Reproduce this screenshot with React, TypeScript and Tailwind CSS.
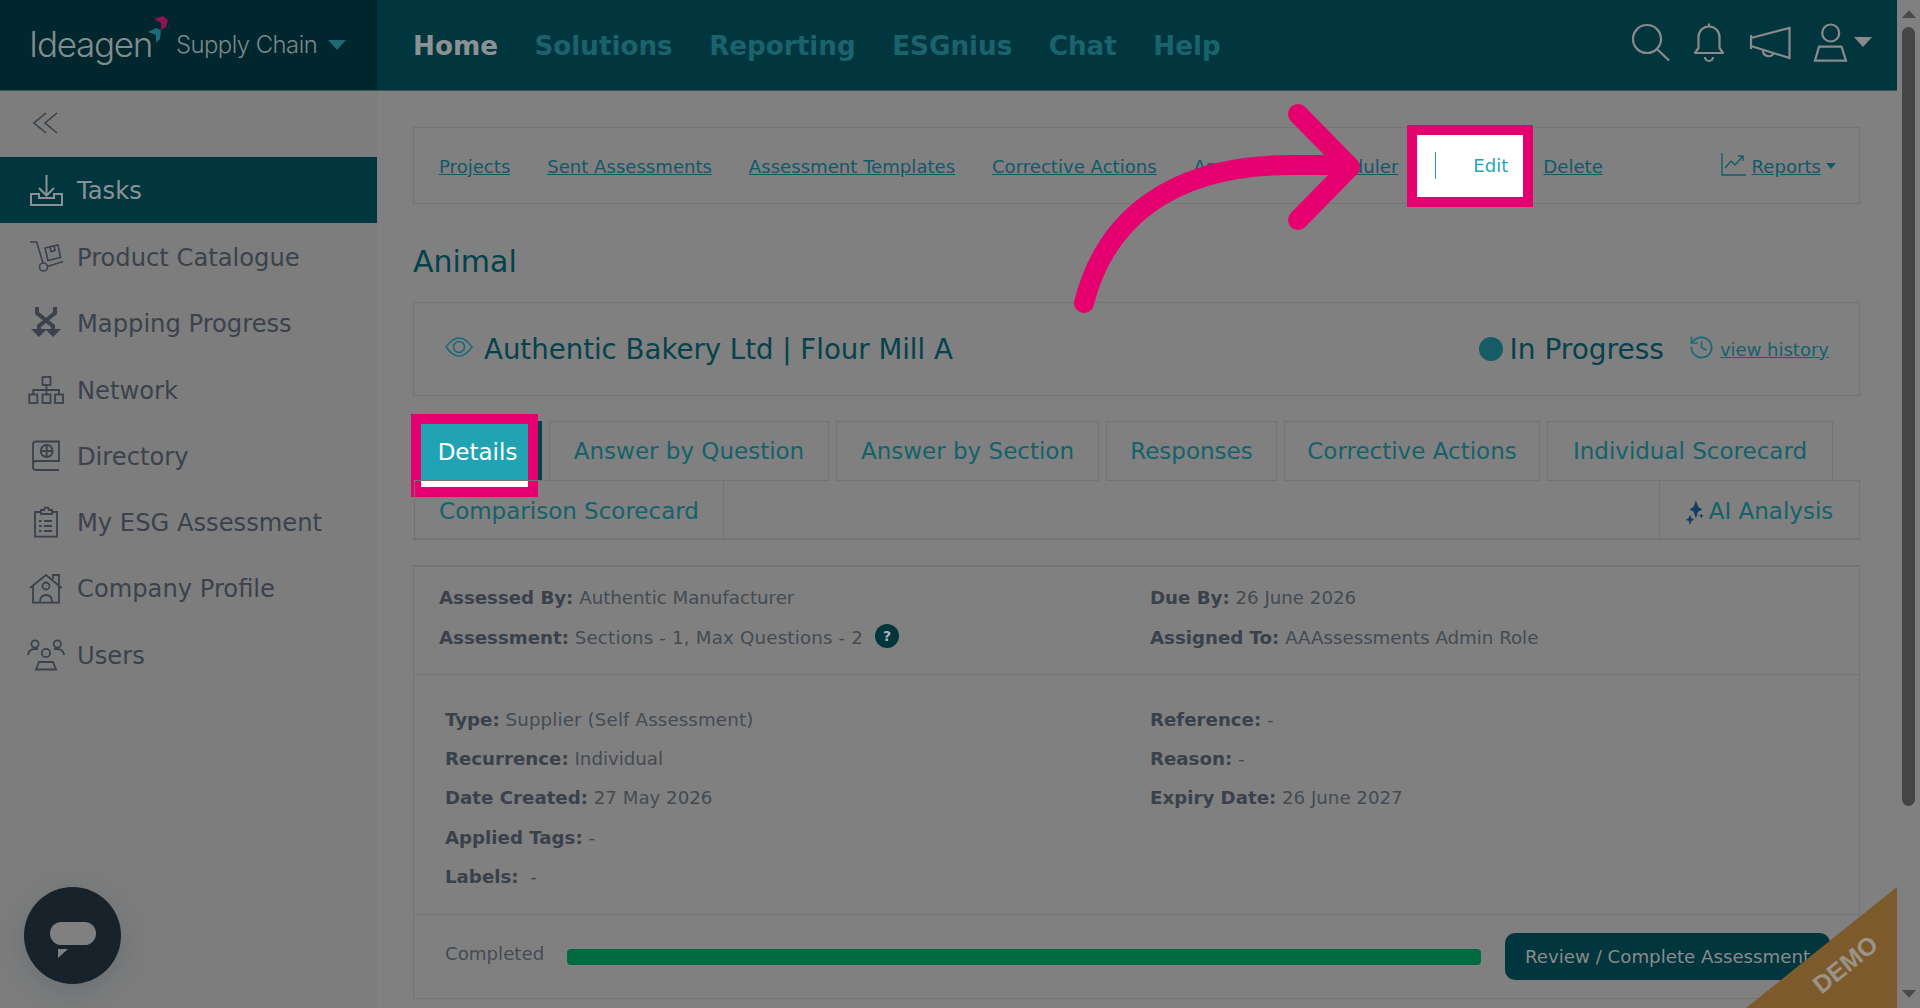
import { History } from "lucide-react";

const side = "#3b424b";

function TasksIcon() {
  return (
    <svg viewBox="0 0 40 40" className="w-10 h-10" fill="none" stroke="#8a9294" strokeWidth="2">
      <path d="M5 24V35H36V24H28V28H13V24Z" />
      <path d="M20.5 5V25M13 18l7.5 7.5 7.5-7.5" />
    </svg>
  );
}
function CatalogueIcon() {
  return (
    <svg viewBox="0 0 40 40" className="w-10 h-10" fill="none" stroke={side} strokeWidth="1.6">
      <path d="M4 5H10.7L17 26" />
      <circle cx="17.5" cy="30" r="4" />
      <path d="M21.5 29.5L37 24.5" />
      <path d="M19 11L32 8L34.5 20.5L22 23.5Z" />
      <path d="M24 10L25 14.5L29 13.5L28 9" />
    </svg>
  );
}
function MappingIcon() {
  return (
    <svg viewBox="0 0 40 40" className="w-10 h-10" fill="none" stroke={side} strokeWidth="4">
      <path d="M11 4V10L27 23V27M29 4V10L13 23V27" />
      <path d="M5 26H21L13 34Z M19 26H35L27 34Z" fill={side} stroke="none" />
    </svg>
  );
}
function NetworkIcon() {
  return (
    <svg viewBox="0 0 40 40" className="w-10 h-10" fill="none" stroke={side} strokeWidth="1.8">
      <rect x="16.5" y="7" width="8" height="8" />
      <rect x="3.3" y="24.5" width="8" height="8.5" />
      <rect x="16.5" y="24.5" width="8" height="8.5" />
      <rect x="29" y="24.5" width="8" height="8.5" />
      <path d="M20.5 15V24.5M7.3 24.5V20H33V24.5" />
    </svg>
  );
}
function DirectoryIcon() {
  return (
    <svg viewBox="0 0 40 40" className="w-10 h-10" fill="none" stroke={side} strokeWidth="1.8">
      <path d="M7 28a3 3 0 0 1 3-3H33V5.5H10a3 3 0 0 0-3 3V31a3 3 0 0 0 3 3H33" />
      <circle cx="20.7" cy="15" r="6" />
      <path d="M14.7 15H26.7M20.7 9V21" />
    </svg>
  );
}
function EsgIcon() {
  return (
    <svg viewBox="0 0 40 40" className="w-10 h-10" fill="none" stroke={side} strokeWidth="1.8">
      <path d="M15 10H9V34.7H31V10H26" />
      <path d="M15 12V8H18a2.5 2.5 0 0 1 5 0H26V12Z" />
      <path d="M18 19H26M18 24H26M18 29H26M13 19H15.5M13 24H15.5M13 29H15.5" />
    </svg>
  );
}
function CompanyIcon() {
  return (
    <svg viewBox="0 0 40 40" className="w-10 h-10" fill="none" stroke={side} strokeWidth="1.8">
      <path d="M4 19L20 6L35.7 19" />
      <path d="M7 17V33.7H33V17" />
      <path d="M27 10V6H33V16" />
      <circle cx="20" cy="17" r="3.5" />
      <path d="M14 33c0-5 2.5-7 6-7s6 2 6 7" />
    </svg>
  );
}
function UsersIcon() {
  return (
    <svg viewBox="0 0 40 40" className="w-10 h-10" fill="none" stroke={side} strokeWidth="1.8">
      <circle cx="9" cy="9" r="3.6" />
      <circle cx="31.3" cy="9" r="3.6" />
      <circle cx="20" cy="18" r="4.2" />
      <path d="M10 34.5L13 27H27L30 34.5Z" />
      <path d="M2 20c.5-4 3-6 7-6h3M38 20c-.5-4-3-6-7-6h-3" />
    </svg>
  );
}

const menu = [
  { label: "Product Catalogue", icon: <CatalogueIcon /> },
  { label: "Mapping Progress", icon: <MappingIcon /> },
  { label: "Network", icon: <NetworkIcon /> },
  { label: "Directory", icon: <DirectoryIcon /> },
  { label: "My ESG Assessment", icon: <EsgIcon /> },
  { label: "Company Profile", icon: <CompanyIcon /> },
  { label: "Users", icon: <UsersIcon /> },
];

function Info({ k, v, className = "", vClass = "" }: { k: string; v: string; className?: string; vClass?: string }) {
  return (
    <div className={className}>
      <span className="font-bold text-[#3a414a]">{k}</span> <span className={vClass}>{v}</span>
    </div>
  );
}

function Tab({ label, w }: { label: string; w: string }) {
  return (
    <div className={`${w} h-[60px] pt-px flex items-center justify-center border border-[#747474] text-[23px] text-[#14626a] whitespace-nowrap`}>
      {label}
    </div>
  );
}

export default function App() {
  return (
    <div className="relative flex w-full h-[1008px] overflow-hidden bg-[#808080] font-['DejaVu_Sans',sans-serif] text-[18.2px] text-[#444b52]">
      <div className="flex flex-col w-[1897px] shrink-0">
        <header className="flex h-[91px] shrink-0 bg-[#02363f] border-b border-[#2f5a62]">
          <div className="relative flex items-center w-[377px] shrink-0 bg-[#00272e] pl-[29px]">
            <span className="font-['Inter',sans-serif] font-light text-[35px] tracking-[-1.3px] text-[#848c8e] leading-none mb-[2px]">Ideagen</span>
            <svg viewBox="0 0 24 30" className="w-6 h-[30px] -ml-[6px] mb-[28px]">
              <path d="M8 3L17 0L22 4L20 11L15 14V7Z" fill="#8a1552" />
              <path d="M2 16L10 12L15 14L14 23L10 27V19Z" fill="#1c6b78" />
            </svg>
            <span className="font-['Inter',sans-serif] font-light text-[23.8px] tracking-[-0.5px] text-[#7d8688] ml-[6px]">Supply Chain</span>
            <svg viewBox="0 0 18 10" className="w-[18px] h-[10px] ml-[11px]">
              <path d="M0 0H18L9 10Z" fill="#1d6a72" />
            </svg>
          </div>
          <nav className="flex items-center pl-[36px] pt-[4px] gap-[36.5px] text-[26.2px] font-bold text-[#1a636d]">
            <span className="text-[#8c9294]">Home</span>
            <span>Solutions</span>
            <span>Reporting</span>
            <span>ESGnius</span>
            <span>Chat</span>
            <span>Help</span>
          </nav>
          <div className="ml-auto flex items-start pt-[20px] pr-[25px]">
            <svg viewBox="0 0 44 44" className="w-11 h-11" fill="none" stroke="#8a8a8a" strokeWidth="2.2">
              <circle cx="18" cy="19" r="14" />
              <path d="M28.5 29.5L40 40.5" />
            </svg>
            <svg viewBox="0 0 36 44" className="w-9 h-11 ml-[19px]" fill="none" stroke="#8a8a8a" strokeWidth="2.2" strokeLinejoin="round">
              <path d="M17 3.5V6.5M3 33L6.5 28V17a10.5 10.5 0 0 1 21 0V28L31 33Z" />
              <path d="M13 37a4 4 0 0 0 8 0" />
            </svg>
            <svg viewBox="0 0 46 44" className="w-[46px] h-11 ml-[19px]" fill="none" stroke="#8a8a8a" strokeWidth="2.2">
              <path d="M4 15V29M4 18L42.5 8V38L4 26" />
              <path d="M16 30a5.7 5.7 0 0 0 10.5 3.5" />
            </svg>
            <svg viewBox="0 0 36 44" className="w-9 h-11 ml-[19px]" fill="none" stroke="#8a8a8a" strokeWidth="2.2">
              <circle cx="18.7" cy="13" r="8.5" />
              <path d="M7 26.7H29.5L34 40.7H3Z" />
            </svg>
            <svg viewBox="0 0 18 10" className="w-[18px] h-[10px] ml-[6px] mt-[17px]">
              <path d="M0 0H18L9 10Z" fill="#8a8a8a" />
            </svg>
          </div>
        </header>

        <div className="flex flex-1 min-h-0">
          <aside className="w-[377px] shrink-0 bg-[#7d7d7d]">
            <div className="h-[66px] flex items-center pl-[33px]">
              <svg viewBox="0 0 26 22" className="w-[26px] h-[22px] mb-[2px]" fill="none" stroke={side} strokeWidth="1.6">
                <path d="M13 1L1 11L13 21M24 1L12 11L24 21" />
              </svg>
            </div>
            <div className="h-[66px] mb-px flex items-center pl-[26px] bg-[#02363f]">
              <TasksIcon />
              <span className="ml-[11px] mt-[2px] text-[24.2px] text-[#8a9294]">Tasks</span>
            </div>
            {menu.map((m) => (
              <div key={m.label} className="h-[66.3px] flex items-center pl-[26px]">
                {m.icon}
                <span className="ml-[11px] mt-[2px] text-[24.2px] text-[#3b424b]">{m.label}</span>
              </div>
            ))}
          </aside>

          <main className="flex-1 min-w-0 pl-[36px] pr-[37px] pt-[36px]">
            <div className="flex items-center h-[77px] border border-[#747474] pl-[25px] pr-[23px] text-[#10596a] text-[18.1px] whitespace-nowrap">
              <span className="underline mt-[2px]">Projects</span>
              <span className="underline mt-[2px] ml-[36.8px]">Sent Assessments</span>
              <span className="underline mt-[2px] ml-[36.8px]">Assessment Templates</span>
              <span className="underline mt-[2px] ml-[36.8px]">Corrective Actions</span>
              <span className="underline mt-[2px] ml-[36.8px]">Assessment Scheduler</span>
              <div className="ml-[9px] w-[126px] h-[82px] shrink-0 flex items-center border-[10px] border-[#e6006f] bg-white">
                <span className="ml-[18px] w-px h-[27px] bg-[#2aa3b3]" />
                <span className="ml-[37px] text-[#25a6b5]">Edit</span>
              </div>
              <span className="underline mt-[2px] ml-[10px]">Delete</span>
              <div className="ml-auto flex items-center mt-[2px]">
                <svg viewBox="0 0 25 23" className="w-[25px] h-[23px] mb-[4px] mr-[6px]" fill="none" stroke="#10596a" strokeWidth="1.3">
                  <path d="M1 0V22H25" />
                  <path d="M4 15L10 8L14 12L22 3M17 3H22V8" />
                </svg>
                <span className="underline">Reports</span>
                <svg viewBox="0 0 10 6" className="w-[10px] h-[6px] ml-[5px]">
                  <path d="M0 0H10L5 6Z" fill="#10596a" />
                </svg>
              </div>
            </div>

            <h1 className="mt-[35px] h-[44px] flex items-center text-[30px] font-normal text-[#02424c]">Animal</h1>

            <div className="mt-[19px] flex items-center h-[94px] border border-[#747474] pl-[31px] pr-[30px]">
              <svg viewBox="0 0 28 20" className="w-7 h-5 mb-[4px]" fill="none" stroke="#1c6a78" strokeWidth="1.6">
                <path d="M1 10C6 3 10 1 14 1s8 2 13 9c-5 7-9 9-13 9S6 17 1 10Z" />
                <circle cx="14" cy="10" r="5.5" />
              </svg>
              <span className="ml-[11px] mt-[2px] text-[27.6px] text-[#05424c]">Authentic Bakery Ltd | Flour Mill A</span>
              <div className="ml-auto flex items-center">
                <span className="w-6 h-6 rounded-full bg-[#165c66]" />
                <span className="ml-[7px] mt-[2px] text-[28px] text-[#05424c]">In Progress</span>
                <History className="ml-[24px] mb-[4px] w-[27px] h-[27px] text-[#1c6a78]" strokeWidth={1.5} />
                <span className="ml-[5px] text-[18px] text-[#14626a] underline">view history</span>
              </div>
            </div>

            <div className="mt-[25px] flex h-[60px] gap-[7px]">
              <div className="flex h-[60px]">
                <div className="w-[127px] h-[83px] -ml-[2px] -mt-[7px] shrink-0 border-[10px] border-[#e6006f] bg-white">
                  <div className="h-[56px] flex items-center justify-center pl-[6px] bg-[#22a3b3] text-[23px] text-white">Details</div>
                </div>
                <span className="w-1 h-[59px] bg-[#02424c]" />
              </div>
              <Tab label="Answer by Question" w="w-[280px]" />
              <Tab label="Answer by Section" w="w-[263px]" />
              <Tab label="Responses" w="w-[171px]" />
              <Tab label="Corrective Actions" w="w-[256px]" />
              <Tab label="Individual Scorecard" w="w-[286px]" />
            </div>
            <div className="-mt-px flex h-[60px] border-b-2 border-[#747474] text-[23px] text-[#14626a]">
              <div className="w-[310px] ml-[1px] pt-[4px] flex items-center justify-center border-x border-[#747474] border-t">Comparison Scorecard</div>
              <div className="ml-auto w-[201px] pt-[4px] flex items-center justify-center border-x border-[#747474] border-t">
                <svg viewBox="0 0 20 28" className="w-[18px] h-[26px] mr-[5px] mt-[2px]" fill="#123d66">
                  <path d="M11 0L13.5 7L18 10L13.5 12.5L11 20L8.5 12.5L4 10L8.5 7Z" />
                  <path d="M4.5 16L6 19.5L9 21.5L6 23L4.5 27.5L3 23L0 21.5L3 19.5Z" />
                  <path d="M17 14.5L18 16.5L20 17L18 18L17 20L16 18L14 17L16 16.5Z" />
                </svg>
                AI Analysis
              </div>
            </div>

            <div className="mt-[25px] h-[434px] border border-[#747474] border-t-2">
              <div className="h-[108px] pt-[11px] flex border-b border-[#747474] leading-[40px]">
                <div className="w-[736px] pl-[25px] shrink-0">
                  <Info k="Assessed By:" v="Authentic Manufacturer" />
                  <div className="flex items-center">
                    <Info k="Assessment:" v="Sections - 1, Max Questions - 2" vClass="tracking-[0.2px]" />
                    <span className="ml-[12px] mb-[4px] w-6 h-6 rounded-full bg-[#02363f] text-[#a9b4b6] text-[14px] font-bold leading-6 text-center">?</span>
                  </div>
                </div>
                <div>
                  <Info k="Due By:" v="26 June 2026" />
                  <Info k="Assigned To:" v="AAAssessments Admin Role" />
                </div>
              </div>
              <div className="h-[240px] pt-[25px] flex border-b border-[#747474] leading-[39.2px]">
                <div className="w-[736px] pl-[31px] shrink-0">
                  <Info k="Type:" v="Supplier (Self Assessment)" vClass="tracking-[0.15px]" />
                  <Info k="Recurrence:" v="Individual" />
                  <Info k="Date Created:" v="27 May 2026" />
                  <Info k="Applied Tags:" v="-" />
                  <Info k="Labels:" v=" -" className="whitespace-pre" />
                </div>
                <div>
                  <Info k="Reference:" v="-" />
                  <Info k="Reason:" v="-" />
                  <Info k="Expiry Date:" v="26 June 2027" />
                </div>
              </div>
              <div className="flex items-center h-[83px] pl-[31px]">
                <span className="mb-[6px] w-[122px] shrink-0">Completed</span>
                <div className="w-[914px] h-4 rounded-[4px] bg-[#006a40]" />
                <button className="ml-[24px] w-[325px] h-[47px] rounded-[10px] bg-[#02363f] text-left pl-[20px] text-[#8a8a8a] whitespace-nowrap overflow-hidden">
                  Review / Complete Assessment
                </button>
              </div>
            </div>
          </main>
        </div>
      </div>

      <div className="relative flex-1 flex flex-col items-center">
        <svg viewBox="0 0 14 8" className="w-[14px] h-2 mt-[10px]">
          <path d="M0 8H14L7 0Z" fill="#4a4a4a" />
        </svg>
        <div className="mt-[9px] w-[13px] h-[779px] rounded-full bg-[#454545]" />
        <svg viewBox="0 0 14 8" className="w-[14px] h-2 mt-[184px]">
          <path d="M0 0H14L7 8Z" fill="#4a4a4a" />
        </svg>
      </div>

      <svg className="absolute left-0 top-0 w-[1897px] h-[1008px] pointer-events-none" viewBox="0 0 1897 1008" fill="none" stroke="#e6006f" strokeWidth="20" strokeLinecap="round" strokeLinejoin="round">
        <path d="M1084 303C1105 220 1170 165 1290 165L1348 165" />
        <path d="M1298 114L1350 167L1298 220" />
      </svg>

      <div className="absolute left-[1746px] top-[887px] w-[151px] h-[121px] bg-[#7d5a2b] [clip-path:polygon(100%_0,100%_100%,0_100%)]">
        <span className="absolute left-[62px] top-[59px] -rotate-[39deg] font-['Liberation_Sans',sans-serif] text-[25px] font-bold text-[#9a9488]">DEMO</span>
      </div>

      <div className="absolute left-[24px] top-[887px] w-[97px] h-[97px] rounded-full bg-[#18222b] shadow-[0_8px_30px_rgba(70,90,100,0.35)]">
        <div className="absolute left-[26px] top-[35px] w-[46px] h-[23px] rounded-[12px] bg-[#808080]" />
        <svg viewBox="0 0 10 9" className="absolute left-[34px] top-[62px] w-[10px] h-[9px]">
          <path d="M0 0H10L0 9Z" fill="#808080" />
        </svg>
      </div>
    </div>
  );
}
